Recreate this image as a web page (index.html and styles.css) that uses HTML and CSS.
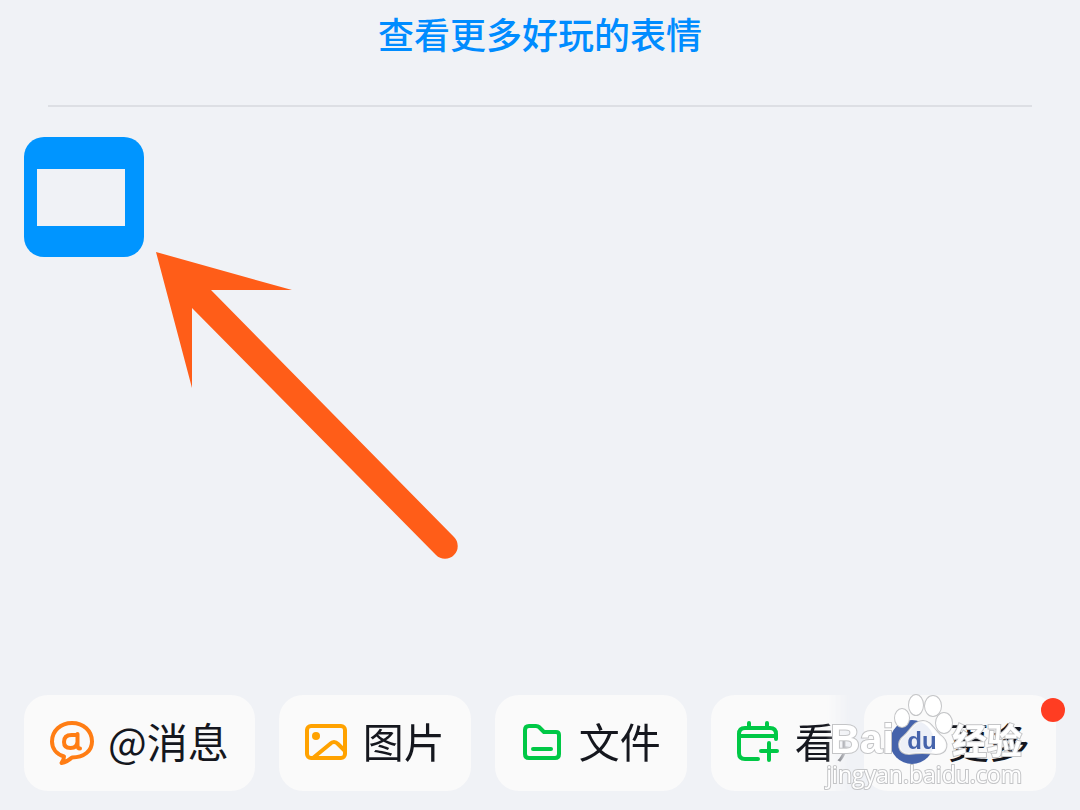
FILE: index.html
```html
<!DOCTYPE html>
<html lang="zh-CN">
<head>
    <meta charset="UTF-8">
    <meta name="viewport" content="width=device-width, initial-scale=1.0">
    <title>表情</title>
    <link rel="stylesheet" href="styles.css">
</head>
<body>
    <header class="more">
        <a class="more-link" href="#">查看更多好玩的表情</a>
    </header>

    <main class="stickers">
        <button class="sticker" type="button" aria-label="表情">
            <span class="sticker-window"></span>
        </button>
        <svg class="arrow" viewBox="0 0 304 310" aria-hidden="true">
            <path d="M0 0L136 38L55 38L298 285A12 12 0 0 1 280 303L36 56L36 136Z"/>
        </svg>
    </main>

    <nav class="toolbar">
        <div class="toolbar-scroll">
            <button class="chip" type="button">
                <svg class="icon orange" viewBox="0 0 48 48" aria-hidden="true">
                    <path d="M16 37.500C8 35 4 29 4 22.500C4 12 12.500 4 24 4S44 12 44 22.500C44 32 36 38.500 24 38.500Q19 43 13.500 44Q16 41 16 37.500Z"/>
                    <path d="M29.500 15V26Q29.500 29.500 32 29.500M29.500 23Q29 29 22.500 29Q16 29 16 23Q16 16 23.500 16H29.500"/>
                </svg>
                <span>@消息</span>
            </button>
            <button class="chip" type="button">
                <svg class="icon amber" viewBox="0 0 48 48" aria-hidden="true">
                    <rect x="4" y="7" width="38" height="32" rx="4"/>
                    <path d="M10 39L27 25Q31 21 35 25L42 32"/>
                    <circle class="dot" cx="13" cy="17" r="4"/>
                </svg>
                <span>图片</span>
            </button>
            <button class="chip" type="button">
                <svg class="icon green" viewBox="0 0 48 48" aria-hidden="true">
                    <path d="M10 7H17Q19 7 20 8L25 13H37Q40 13 40 16V35Q40 39 36 39H10Q6 39 6 35V11Q6 7 10 7Z"/>
                    <path d="M14 30H32"/>
                </svg>
                <span>文件</span>
            </button>
            <button class="chip" type="button">
                <svg class="icon green" viewBox="0 0 48 48" aria-hidden="true">
                    <path d="M23 40H10Q4 40 4 34V15Q4 9 10 9H35Q41 9 41 15V20M4 17H41M14 4V9M32 4V9M34 24V41M26 32H42"/>
                </svg>
                <span>看点</span>
            </button>
        </div>
        <button class="chip" type="button">
            <span class="disc"></span>
            <span>更多</span>
            <span class="badge"></span>
        </button>

        <div class="watermark" aria-hidden="true">
            <div class="brand">
                <span class="brand-name">Bai</span>
                <svg class="paw" viewBox="0 0 58 66">
                    <path class="pad" d="M29 27C36 27 39 34 46 41C56 48 54 60 42 60Q28 58 15 60C4 60 2 48 10 42C17 36 20 27 29 27Z"/>
                    <ellipse cx="8" cy="24" rx="7" ry="9"/>
                    <ellipse cx="22" cy="11" rx="7" ry="10"/>
                    <ellipse cx="39" cy="12" rx="8" ry="10"/>
                    <ellipse cx="50" cy="29" rx="8" ry="10"/>
                    <text x="28" y="55">du</text>
                </svg>
                <span class="brand-cn">经验</span>
            </div>
            <div class="site">jingyan.baidu.com</div>
        </div>
    </nav>
</body>
</html>
```
FILE: styles.css
```css
* {
    box-sizing: border-box;
}
body {
    margin: 0;
    min-height: 100vh;
    display: flex;
    flex-direction: column;
    background-color: #f0f2f6;
    color: #15171e;
    font-family: "Noto Sans CJK SC", sans-serif;
    overflow-x: hidden;
}
button {
    border: 0;
    padding: 0;
    color: inherit;
    font: inherit;
    cursor: pointer;
}
.more {
    margin: 0 48px;
    padding: 9px 0 48px;
    border-bottom: 2px solid #dddfe4;
    text-align: center;
}
.more-link {
    display: block;
    color: #008cff;
    font-size: 36px;
    font-weight: 500;
    line-height: 48px;
    text-decoration: none;
}
.stickers {
    position: relative;
    flex: 1;
    padding: 30px 24px;
}
.sticker {
    display: grid;
    width: 120px;
    height: 120px;
    padding: 32px 19px 31px 13px;
    border-radius: 20px;
    background-color: #0095ff;
}
.sticker-window {
    background-color: #f0f2f6;
}
.arrow {
    position: absolute;
    left: 156px;
    top: 145px;
    width: 304px;
    fill: #ff5d18;
}
.toolbar {
    position: relative;
    display: flex;
    gap: 14px;
    padding: 0 24px 19px;
}
.toolbar-scroll {
    flex: 1;
    min-width: 0;
    display: flex;
    gap: 24px;
    overflow: hidden;
    mask-image: linear-gradient(to right, #000 calc(100% - 24px), transparent);
}
.chip {
    position: relative;
    flex: none;
    display: flex;
    align-items: center;
    gap: 12px;
    height: 96px;
    padding: 0 26px 6px 24px;
    border-radius: 24px;
    background-color: #fafafa;
    font-size: 41px;
    line-height: 60px;
    white-space: nowrap;
}
.icon {
    width: 48px;
    height: 48px;
    margin-top: 6px;
    fill: none;
    stroke: currentColor;
    stroke-width: 4;
    stroke-linecap: round;
    stroke-linejoin: round;
}
.orange {
    color: #ff7d14;
}
.amber {
    color: #ffa200;
}
.green {
    color: #00c846;
}
.dot {
    fill: currentColor;
    stroke: none;
}
.disc {
    width: 44px;
    height: 44px;
    margin: 4px 2px 0;
    border-radius: 50%;
    background-color: #4563ab;
}
.badge {
    position: absolute;
    top: 3px;
    right: -9px;
    width: 24px;
    height: 24px;
    border-radius: 50%;
    background-color: #ff3d22;
}
.watermark {
    position: absolute;
    right: 58px;
    bottom: 22px;
    color: #fff;
    pointer-events: none;
    -webkit-text-stroke: 2px #c4c5c7;
    paint-order: stroke fill;
}
.brand {
    display: flex;
    align-items: flex-end;
    justify-content: flex-end;
    height: 66px;
}
.brand-name {
    font: bold 41px/42px "Liberation Sans", sans-serif;
}
.paw {
    flex: none;
    width: 58px;
    height: 66px;
    overflow: visible;
    fill: #fff;
    stroke: #c4c5c7;
    stroke-width: 2;
}
.paw .pad {
    fill-opacity: 0.9;
}
.paw text {
    font: bold 24px "Liberation Sans", sans-serif;
    text-anchor: middle;
    fill: #4563ab;
    stroke: none;
    -webkit-text-stroke: 0;
}
.brand-cn {
    font-size: 35px;
    font-weight: bold;
    line-height: 42px;
}
.site {
    font: 23px/28px "Open Sans", sans-serif;
}
```
